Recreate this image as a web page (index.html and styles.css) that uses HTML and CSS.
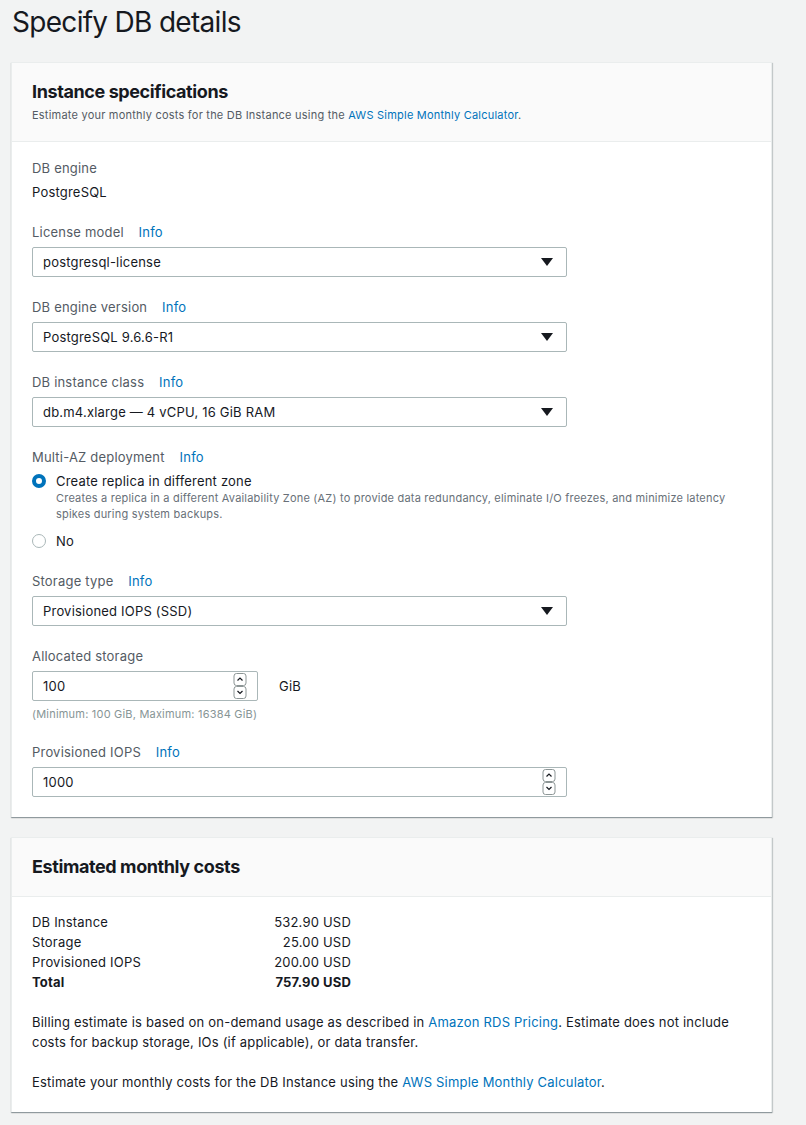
FILE: index.html
```html
<!DOCTYPE html>
<html lang="en">
<head>
<meta charset="utf-8">
<title>Specify DB details</title>
<link rel="stylesheet" href="styles.css">
</head>
<body>
<main class="page">
  <h1 class="page-title">Specify DB details</h1>

  <section class="card">
    <header class="card-header">
      <h2 class="card-title">Instance specifications</h2>
      <p class="card-sub">Estimate your monthly costs for the DB Instance using the <a class="link" href="#">AWS Simple Monthly Calculator</a>.</p>
    </header>
    <div class="card-body">
      <div class="field">
        <div class="label">DB engine</div>
        <div class="value">PostgreSQL</div>
      </div>

      <div class="field">
        <div class="label">License model <a class="link info" href="#">Info</a></div>
        <div class="select"><span>postgresql-license</span><span class="arrow"></span></div>
      </div>

      <div class="field">
        <div class="label">DB engine version <a class="link info" href="#">Info</a></div>
        <div class="select"><span>PostgreSQL 9.6.6-R1</span><span class="arrow"></span></div>
      </div>

      <div class="field">
        <div class="label">DB instance class <a class="link info" href="#">Info</a></div>
        <div class="select"><span>db.m4.xlarge — 4 vCPU, 16 GiB RAM</span><span class="arrow"></span></div>
      </div>

      <div class="field">
        <div class="label">Multi-AZ deployment <a class="link info" href="#">Info</a></div>
        <div class="radio-group">
          <div class="radio-row">
            <span class="radio checked"></span>
            <div class="radio-text">
              <div class="radio-label">Create replica in different zone</div>
              <div class="radio-desc">Creates a replica in a different Availability Zone (AZ) to provide data redundancy, eliminate I/O freezes, and minimize latency spikes during system backups.</div>
            </div>
          </div>
          <div class="radio-row no">
            <span class="radio"></span>
            <div class="radio-text">
              <div class="radio-label">No</div>
            </div>
          </div>
        </div>
      </div>

      <div class="field">
        <div class="label">Storage type <a class="link info" href="#">Info</a></div>
        <div class="select"><span>Provisioned IOPS (SSD)</span><span class="arrow"></span></div>
      </div>

      <div class="field">
        <div class="label">Allocated storage</div>
        <div class="input-row">
          <div class="number short"><span>100</span>
            <span class="spin">
              <svg width="14" height="26" viewBox="0 0 14 26"><rect x="1" y="0.5" width="12" height="12" rx="2.5" fill="#fff" stroke="#8d9696"/><rect x="1" y="13.5" width="12" height="12" rx="2.5" fill="#fff" stroke="#8d9696"/><path d="M4.5 7.5 L7 5 L9.5 7.5" fill="none" stroke="#16191f" stroke-width="1.2"/><path d="M4.5 18 L7 20.5 L9.5 18" fill="none" stroke="#16191f" stroke-width="1.2"/></svg>
            </span>
          </div>
          <span class="unit">GiB</span>
        </div>
        <div class="hint">(Minimum: 100 GiB, Maximum: 16384 GiB)</div>
      </div>

      <div class="field last">
        <div class="label">Provisioned IOPS <a class="link info" href="#">Info</a></div>
        <div class="number"><span>1000</span>
          <span class="spin">
            <svg width="14" height="26" viewBox="0 0 14 26"><rect x="1" y="0.5" width="12" height="12" rx="2.5" fill="#fff" stroke="#8d9696"/><rect x="1" y="13.5" width="12" height="12" rx="2.5" fill="#fff" stroke="#8d9696"/><path d="M4.5 7.5 L7 5 L9.5 7.5" fill="none" stroke="#16191f" stroke-width="1.2"/><path d="M4.5 18 L7 20.5 L9.5 18" fill="none" stroke="#16191f" stroke-width="1.2"/></svg>
          </span>
        </div>
      </div>
    </div>
  </section>

  <section class="card">
    <header class="card-header compact">
      <h2 class="card-title">Estimated monthly costs</h2>
    </header>
    <div class="card-body costs">
      <div class="cost-table">
        <span>DB Instance</span><span class="amt">532.90 USD</span>
        <span>Storage</span><span class="amt">25.00 USD</span>
        <span>Provisioned IOPS</span><span class="amt">200.00 USD</span>
        <span class="total">Total</span><span class="amt total">757.90 USD</span>
      </div>
      <p class="para">Billing estimate is based on on-demand usage as described in <a class="link" href="#">Amazon RDS Pricing</a>. Estimate does not include costs for backup storage, IOs (if applicable), or data transfer.</p>
      <p class="para">Estimate your monthly costs for the DB Instance using the <a class="link" href="#">AWS Simple Monthly Calculator</a>.</p>
    </div>
  </section>
</main>
</body>
</html>
```

FILE: styles.css
```css
* { box-sizing: border-box; }

html, body {
  margin: 0;
  padding: 0;
  background: #f2f3f3;
}

body {
  font-family: Inter, "Noto Sans", Arial, sans-serif;
  color: #16191f;
  font-size: 13px;
  line-height: 20px;
  letter-spacing: 0.2px;
}

.page {
  padding: 0 34px 20px 11px;
}

.page-title {
  margin: 0 0 0 1px;
  font-size: 28px;
  font-weight: 400;
  line-height: 44px;
  height: 44px;
  color: #16191f;
  letter-spacing: -0.7px;
}

.card {
  margin-top: 18px;
  width: 761px;
  background: #fff;
  border: 1px solid #eaeded;
  border-bottom: none;
  box-shadow: 0 1px 1px 0 rgba(0, 28, 36, 0.3), 1px 1px 1px 0 rgba(0, 28, 36, 0.15);
}

.card + .card { margin-top: 20px; }

.card-header {
  background: #fafafa;
  border-bottom: 1px solid #eaeded;
  padding: 17px 20px 18px;
}

.card-header.compact { padding-bottom: 17px; }

.card-title {
  margin: 0;
  font-size: 18px;
  line-height: 24px;
  font-weight: 700;
  letter-spacing: -0.4px;
}

.card-sub {
  margin: 3px 0 0;
  font-size: 11px;
  line-height: 16px;
  color: #545b64;
  letter-spacing: 0.22px;
}

.link {
  color: #0073bb;
  text-decoration: none;
}

.card-body {
  padding: 16px 20px 20px;
}

.field {
  margin-bottom: 20px;
}
.field.last { margin-bottom: 0; }

.label {
  color: #545b64;
  line-height: 20px;
}

.info { margin-left: 11px; }

.value {
  margin-top: 4px;
}

.select, .number {
  margin-top: 5px;
  width: 535px;
  height: 30px;
  border: 1px solid #aab7b8;
  border-radius: 2px;
  display: flex;
  align-items: center;
  justify-content: space-between;
  padding: 0 12px 0 10px;
  background: #fff;
}

.arrow {
  width: 0;
  height: 0;
  border-left: 6px solid transparent;
  border-right: 6px solid transparent;
  border-top: 8px solid #16191f;
  margin-right: 1px;
}

.number { padding-right: 10px; }
.number.short { width: 226px; margin-top: 0; }

.spin { display: flex; }

.input-row {
  margin-top: 5px;
  display: flex;
  align-items: center;
  gap: 21px;
}

.unit { line-height: 20px; }

.hint {
  margin-top: 5px;
  font-size: 11px;
  line-height: 16px;
  color: #879596;
}

.radio-group {
  margin-top: 5px;
}

.radio-row {
  display: flex;
  gap: 10px;
}

.radio-row.no { margin-top: 9px; }

.radio {
  flex: none;
  width: 14px;
  height: 14px;
  margin: 2px 0 0 0;
  border-radius: 50%;
  border: 1.5px solid #aab7b8;
  background: #fff;
}
.radio-row.no .radio { margin-top: 3px; }

.radio.checked {
  border: 4px solid #0073bb;
}

.radio-label { line-height: 18px; }
.radio-row.no .radio-label { line-height: 20px; }

.radio-desc {
  font-size: 11px;
  line-height: 16px;
  color: #687078;
  max-width: 680px;
}

.costs { padding-top: 15px; }

.cost-table {
  display: grid;
  grid-template-columns: 160px 159px;
}
.amt { text-align: right; }
.total { font-weight: 700; }

.para {
  margin: 20px 0 0;
  max-width: 700px;
}
```
